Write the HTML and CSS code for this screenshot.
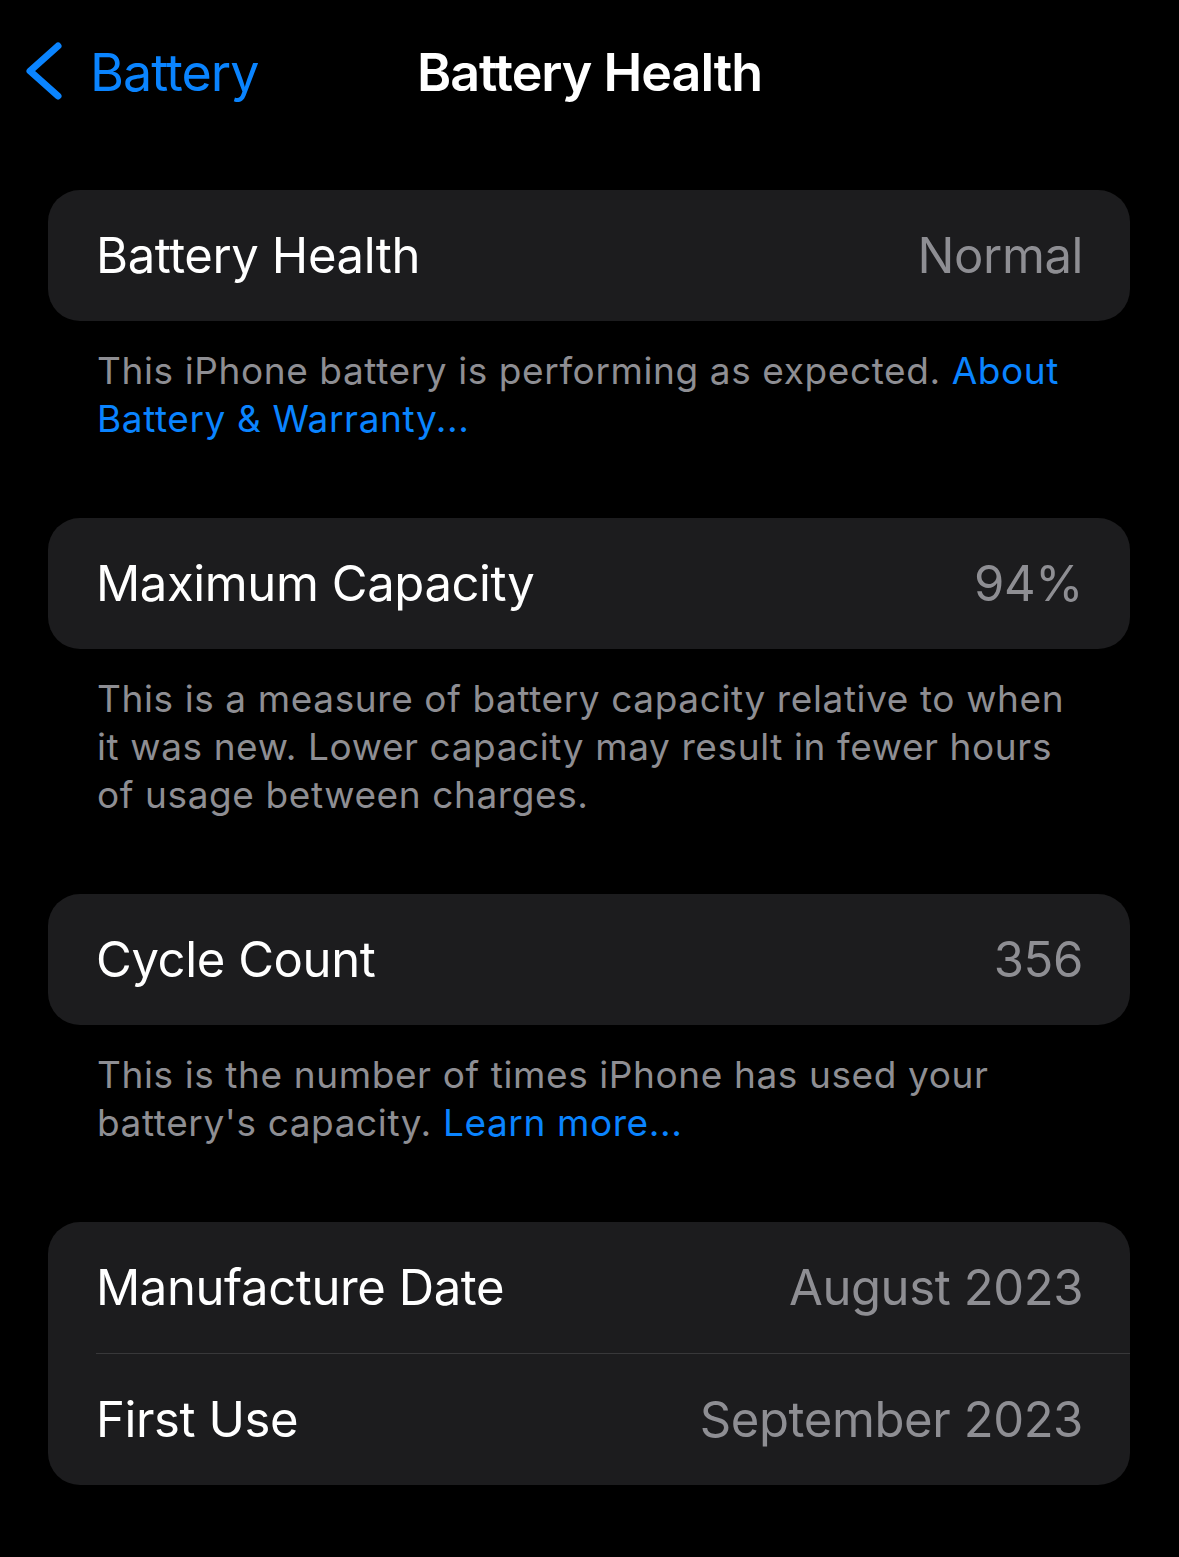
FILE: index.html
```html
<!DOCTYPE html>
<html lang="en">
<head>
    <meta charset="UTF-8">
    <meta name="viewport" content="width=device-width, initial-scale=1.0">
    <title>Battery Health</title>
    <link rel="stylesheet" href="styles.css">
</head>
<body>
    <div class="nav">
        <a class="back" href="#">
            <svg class="chevron" width="40" height="62" viewBox="0 0 40 62">
                <path d="M34 6 L6 31 L34 56" fill="none" stroke="#0a84ff" stroke-width="7" stroke-linecap="round" stroke-linejoin="round"/>
            </svg>
            <span>Battery</span>
        </a>
        <div class="title">Battery Health</div>
        <div></div>
    </div>

    <div class="list">
        <div class="group">
            <div class="row">
                <span class="label">Battery Health</span>
                <span class="value">Normal</span>
            </div>
        </div>
        <p class="footnote">This iPhone battery is performing as expected. <a href="#">About Battery &amp; Warranty...</a></p>

        <div class="group">
            <div class="row">
                <span class="label">Maximum Capacity</span>
                <span class="value">94%</span>
            </div>
        </div>
        <p class="footnote">This is a measure of battery capacity relative to when it was new. Lower capacity may result in fewer hours of usage between charges.</p>

        <div class="group">
            <div class="row">
                <span class="label">Cycle Count</span>
                <span class="value">356</span>
            </div>
        </div>
        <p class="footnote">This is the number of times iPhone has used your battery's capacity. <a href="#">Learn more...</a></p>

        <div class="group">
            <div class="row">
                <span class="label">Manufacture Date</span>
                <span class="value">August 2023</span>
            </div>
            <div class="row">
                <span class="label">First Use</span>
                <span class="value">September 2023</span>
            </div>
        </div>
    </div>
</body>
</html>
```

FILE: styles.css
```css
body {
    margin: 0;
    background: #000;
    color: #fff;
    font-family: Inter, "Noto Sans", sans-serif;
}
a {
    color: #0a84ff;
    text-decoration: none;
}
.nav {
    height: 144px;
    display: grid;
    grid-template-columns: 1fr auto 1fr;
    align-items: center;
}
.back {
    display: flex;
    align-items: center;
    gap: 26px;
    padding-left: 24px;
    font-size: 52px;
    letter-spacing: -1px;
}
.chevron {
    flex: none;
    margin-top: -2px;
}
.title {
    font-size: 52px;
    font-weight: 600;
    letter-spacing: -1px;
}
.list {
    padding: 46px 49px 0 48px;
}
.group {
    background: #1c1c1e;
    border-radius: 32px;
    overflow: hidden;
}
.row {
    height: 131px;
    display: flex;
    align-items: center;
    justify-content: space-between;
    padding: 0 47px 0 48px;
    font-size: 49px;
    letter-spacing: -0.4px;
}
.row + .row {
    border-top: 1px solid #38383a;
    margin-left: 48px;
    padding-left: 0;
}
.value {
    color: #8e8e93;
}
.footnote {
    margin: 26px 45px 75px 49px;
    font-size: 37px;
    line-height: 48px;
    color: #8e8e93;
    letter-spacing: 0.6px;
}
```
